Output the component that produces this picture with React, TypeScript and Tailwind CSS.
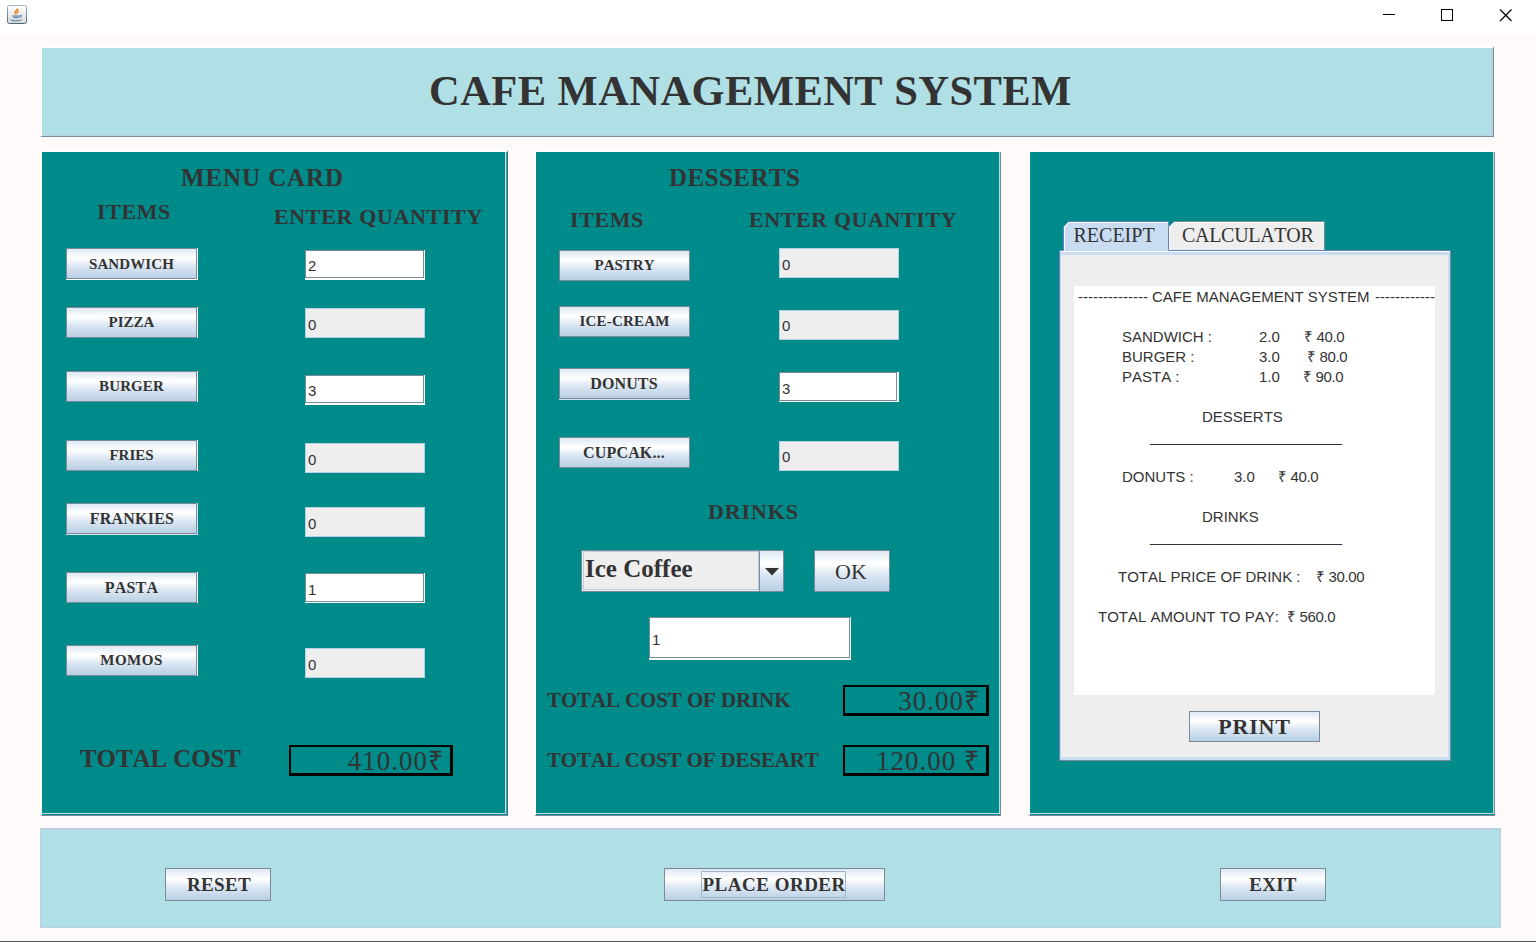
import React from "react";

const metal = "bg-[linear-gradient(180deg,#dde8f3_0%,#ffffff_30%,#ffffff_32%,#dde8f3_58%,#b8cfe5_100%)]";
const serif = "font-['Liberation_Serif','Times_New_Roman',serif]";
const sans = "font-['Liberation_Sans',Arial,sans-serif]";

type ItemButtonProps = { label: string; gap: string; text: string; trim?: string };

function ItemButton({ label, gap, text, trim = "" }: ItemButtonProps) {
  return (
    <div className={`flex shrink-0 ${gap} ${trim}`}>
      <button
        className={`flex h-[31px] w-[131px] items-center justify-center border border-[#7a8a99] ${metal} font-bold leading-[29px] ${text}`}
      >
        {label}
      </button>
    </div>
  );
}

type QtyProps = { value: string; gap: string; edge?: string; pad?: string };

function Quantity({ value, gap, edge, pad = "pt-[3px]" }: QtyProps) {
  if (edge) {
    return (
      <div className={`h-[30px] w-[120px] shrink-0 bg-white ${edge} ${gap} ${sans}`}>
        <div className={`h-full border border-[#7a8a99] pl-[2px] ${pad} text-[15px] leading-[26px]`}>{value}</div>
      </div>
    );
  }
  return (
    <div
      className={`h-[30px] w-[120px] shrink-0 border border-[#b8cfe5] bg-[#eeeeee] pl-[2px] ${pad} text-[15px] leading-[26px] ${gap} ${sans}`}
    >
      {value}
    </div>
  );
}

function Total({ value, width, pad }: { value: string; width: string; pad: string }) {
  return (
    <div
      className={`h-[31px] shrink-0 border-2 border-r-[3px] border-b-[3px] border-black text-right text-[27px] leading-[28px] tracking-[1px] ${width} ${pad}`}
    >
      {value}
    </div>
  );
}

function Panel({ children, wide = false }: { children: React.ReactNode; wide?: boolean }) {
  return (
    <section
      className={`flex h-[666px] shrink-0 border-l-2 border-t-2 border-b border-l-white border-t-white border-b-[#7a8a99] bg-[#008b8b] ${
        wide ? "w-[468px] border-r border-r-[#008b8b]" : "w-[467px]"
      }`}
    >
      <div className="flex min-w-0 flex-1 border-r border-[#7a8a99] pb-px">
        <div className="flex min-w-0 flex-1 flex-col border-b border-r border-[#b8dfe8]">{children}</div>
      </div>
    </section>
  );
}

function JavaIcon() {
  return (
    <svg width="20" height="19" viewBox="0 0 20 19" className="ml-[7px] mt-[5px]">
      <defs>
        <linearGradient id="tile" x1="0" y1="0" x2="0" y2="1">
          <stop offset="0" stopColor="#ffffff" />
          <stop offset="1" stopColor="#d8d8d8" />
        </linearGradient>
        <linearGradient id="rim" x1="0" y1="0" x2="0" y2="1">
          <stop offset="0" stopColor="#9fb4c8" />
          <stop offset="1" stopColor="#4f6677" />
        </linearGradient>
      </defs>
      <rect x="0.5" y="0.5" width="19" height="18" rx="1.8" fill="url(#tile)" stroke="url(#rim)" />
      <path d="M10.6 3.4C11 5.2 7.8 5.8 8 7.6C8.1 8.4 8.8 8.8 9.1 9.2M11.8 6C10.1 6.5 9.8 7.4 10.4 8.6" fill="none" stroke="#ee8a2c" strokeWidth="1.6" />
      <path d="M5.4 10.2H12.6V12.6Q12 13.6 9.2 13.6T5.8 12.6Z" fill="#7f9db8" />
      <path d="M12.8 10.4C15 10 15 12 12.6 12.2M3.6 14.8C5.5 16.2 12.6 16.2 14.6 14.8" fill="none" stroke="#6d8fac" strokeWidth="1.2" />
    </svg>
  );
}

type Cell = { text: string; width: string };

function ReceiptRow({ indent, cells, gap = "" }: { indent: string; cells: Cell[]; gap?: string }) {
  return (
    <div className={`flex h-5 shrink-0 whitespace-pre ${indent} ${gap}`}>
      {cells.map((c) => (
        <span key={c.text} className={`shrink-0 ${c.width} ${c.text.startsWith("₹") ? "tracking-[-0.35px]" : ""}`}>
          {c.text}
        </span>
      ))}
    </div>
  );
}

function TabbedPane() {
  return (
    <div className="ml-[29px] mt-[69px] flex h-[540px] w-[392px] flex-col">
      <div className="flex h-[29px] shrink-0 pl-1">
        <svg width="262" height="30" viewBox="0 0 262 30" className="absolute">
          <path d="M0.5 30V5.5L5.5 0.5H105.5V30Z" fill="#c8ddf2" />
          <path d="M0.5 29V5.5L5.5 0.5H105.5V29" fill="none" stroke="#6382bf" />
          <path d="M1.5 30V6L6 1.5H105" fill="none" stroke="#ffffff" />
          <path d="M106 29V5.5L111 0.5H261.5V29Z" fill="#eeeeee" />
          <path d="M106.5 5.5L111.5 0.5H261.5V29" fill="none" stroke="#7a8a99" />
          <path d="M106.5 29V6L111 1.5H261" fill="none" stroke="#ffffff" />
        </svg>
        <div className="relative w-[106px] pl-[10.5px] text-[20px] leading-[28px]">RECEIPT</div>
        <div className="relative w-[156px] pl-[13px] text-[20px] leading-[28px] tracking-[-0.3px]">CALCULATOR</div>
      </div>
      <div className="flex min-h-0 flex-1 border-b border-l border-r border-t border-b-[#7a8a99] border-l-[#6382bf] border-r-[#7a8a99] border-t-[#6382bf]">
        <div className="flex flex-1 flex-col border-t border-white">
          <div className="flex flex-1 flex-col items-center border-b-[3px] border-l border-r-2 border-t-[3px] border-[#c8ddf2] bg-[#eeeeee]">
            <div className={`mt-[31px] flex h-[409px] w-[361px] shrink-0 flex-col bg-white pt-px text-[15px] leading-5 ${sans}`}>
              <ReceiptRow indent="pl-[4px]" cells={[{ text: "-------------- ", width: "w-[74px]" }, { text: "CAFE MANAGEMENT SYSTEM", width: "w-[223px]" }, { text: "------------", width: "w-[60px]" }]} />
              <ReceiptRow gap="mt-5" indent="pl-[48px]" cells={[{ text: "SANDWICH :", width: "w-[137px]" }, { text: "2.0", width: "w-[45px]" }, { text: "₹ 40.0", width: "w-[50px]" }]} />
              <ReceiptRow indent="pl-[48px]" cells={[{ text: "BURGER :", width: "w-[137px]" }, { text: "3.0", width: "w-[48px]" }, { text: "₹ 80.0", width: "w-[50px]" }]} />
              <ReceiptRow indent="pl-[48px]" cells={[{ text: "PASTA :", width: "w-[137px]" }, { text: "1.0", width: "w-[44px]" }, { text: "₹ 90.0", width: "w-[50px]" }]} />
              <ReceiptRow gap="mt-5" indent="pl-[128px]" cells={[{ text: "DESSERTS", width: "w-[100px]" }]} />
              <ReceiptRow indent="pl-[76px]" cells={[{ text: "_______________________", width: "w-[200px]" }]} />
              <ReceiptRow gap="mt-5" indent="pl-[48px]" cells={[{ text: "DONUTS :", width: "w-[112px]" }, { text: "3.0", width: "w-[44px]" }, { text: "₹ 40.0", width: "w-[50px]" }]} />
              <ReceiptRow gap="mt-5" indent="pl-[128px]" cells={[{ text: "DRINKS", width: "w-[100px]" }]} />
              <ReceiptRow indent="pl-[76px]" cells={[{ text: "_______________________", width: "w-[200px]" }]} />
              <ReceiptRow gap="mt-5" indent="pl-[44px]" cells={[{ text: "TOTAL PRICE OF DRINK :", width: "w-[198px]" }, { text: "₹ 30.00", width: "w-[60px]" }]} />
              <ReceiptRow gap="mt-5" indent="pl-[24px]" cells={[{ text: "TOTAL AMOUNT TO PAY:", width: "w-[189px]" }, { text: "₹ 560.0", width: "w-[60px]" }]} />
            </div>
            <button className={`mt-4 h-[31px] w-[131px] shrink-0 border border-[#7a8a99] ${metal} text-[22px] font-bold leading-[29px] tracking-[0.8px]`}>
              PRINT
            </button>
          </div>
        </div>
      </div>
    </div>
  );
}

export default function App() {
  return (
    <div className={`flex h-[942px] w-[1536px] flex-col overflow-hidden border-b border-[#555555] bg-[#fffafa] text-[#333333] [font-kerning:none] ${serif}`}>
      <header className="flex h-[34px] shrink-0 bg-white">
        <JavaIcon />
        <svg width="130" height="34" viewBox="0 0 130 34" className="ml-auto mr-[23px]" shapeRendering="crispEdges" fill="none" stroke="#000000">
          <path d="M0 14.5H12" />
          <rect x="58.5" y="9.5" width="11" height="11" />
          <path d="M117 9.5L128.5 21M128.5 9.5L117 21" shapeRendering="auto" strokeWidth="1.2" />
        </svg>
      </header>

      <div className="ml-10 mt-3 flex h-[91px] w-[1454px] shrink-0 border-b border-l-2 border-r border-t-2 border-b-[#7a8a99] border-l-white border-r-[#7a8a99] border-t-white">
        <h1 className="flex-1 border-b border-r-2 border-b-[#b8cfe5] border-r-[#b8cfe5] bg-[#b0e0e6] pl-[387px] text-[42.5px] font-bold leading-[86px] tracking-[0.45px]">
          CAFE MANAGEMENT SYSTEM
        </h1>
      </div>

      <main className="ml-10 mt-[13px] flex h-[666px] shrink-0">
        <Panel wide>
          <div className="flex h-[96px] shrink-0">
            <div className="w-0 shrink-0 whitespace-nowrap pl-[55px] pt-[49px] text-[22px] font-bold leading-[22px] tracking-[0.6px]">ITEMS</div>
            <div className="shrink-0 whitespace-nowrap pl-[84px] pt-[12px] font-bold">
              <h2 className="text-[25px] leading-[28px] tracking-[0.9px]">MENU CARD</h2>
              <div className="pl-[93px] pt-[14px] text-[22px] leading-[22px] tracking-[0.65px]">ENTER QUANTITY</div>
            </div>
          </div>
          <div className="flex h-[491px] shrink-0">
            <div className="flex w-[156px] flex-col items-end">
              <ItemButton label="SANDWICH" gap="mt-0" text="pt-px text-[15px] tracking-[0.1px]" trim="border-b border-r border-white" />
              <ItemButton label="PIZZA" gap="mt-[27px]" text="text-[15px]" trim="border-r border-white" />
              <ItemButton label="BURGER" gap="mt-[33px]" text="text-[15px] tracking-[0.1px]" trim="border-r border-white" />
              <ItemButton label="FRIES" gap="mt-[38px]" text="text-[15px]" trim="border-r border-white" />
              <ItemButton label="FRANKIES" gap="mt-[32px]" text="pl-px text-[16px] tracking-[0.2px]" trim="border-b border-r border-[#d5e3f0]" />
              <ItemButton label="PASTA" gap="mt-[37px]" text="text-[16px] tracking-[0.2px]" trim="border-r border-white" />
              <ItemButton label="MOMOS" gap="mt-[42px]" text="text-[15px] tracking-[0.5px]" trim="border-r border-white" />
            </div>
            <div className="ml-[107px] flex flex-col">
              <Quantity value="2" gap="mt-[2px]" edge="pb-[2px] pr-px" pad="pt-[2px]" />
              <Quantity value="0" gap="mt-[28px]" />
              <Quantity value="3" gap="mt-[37px]" edge="pb-[2px] pr-px" pad="pt-[2px]" />
              <Quantity value="0" gap="mt-[38px]" />
              <Quantity value="0" gap="mt-[34px]" />
              <Quantity value="1" gap="mt-[36px]" edge="pb-px pr-px" />
              <Quantity value="0" gap="mt-[45px]" />
            </div>
          </div>
          <div className="mt-[6px] flex">
            <div className="w-[209px] pl-[38px] text-[25px] font-bold leading-[28px] tracking-[-0.1px]">TOTAL COST</div>
            <Total value="410.00₹" width="w-[164px] ml-[38px]" pad="pr-[6px]" />
          </div>
        </Panel>

        <div className="w-[26px] shrink-0" />

        <Panel>
          <h2 className="ml-[133px] mt-[12px] text-[25px] font-bold leading-[28px] tracking-[0.45px]">DESSERTS</h2>
          <div className="mt-[17px] flex h-[22px] shrink-0 text-[22px] font-bold leading-[22px]">
            <div className="w-[179px] pl-[34px] tracking-[0.6px]">ITEMS</div>
            <div className="pl-[34px] tracking-[0.6px]">ENTER QUANTITY</div>
          </div>
          <div className="flex h-[260px] shrink-0 pl-[23px]">
            <div className="flex flex-col">
              <ItemButton label="PASTRY" gap="mt-[19px]" text="text-[15px]" />
              <ItemButton label="ICE-CREAM" gap="mt-[25px]" text="text-[15px] tracking-[0.2px]" />
              <ItemButton label="DONUTS" gap="mt-[31px]" text="pr-px text-[16px] tracking-[0.1px]" trim="border-b border-[#d5e3f0]" />
              <ItemButton label="CUPCAK..." gap="mt-[37px]" text="pr-px pb-px text-[16px] tracking-[0.15px]" />
            </div>
            <div className="ml-[89px] flex flex-col">
              <Quantity value="0" gap="mt-[17px]" />
              <Quantity value="0" gap="mt-[32px]" pad="pt-[2px]" />
              <Quantity value="3" gap="mt-[32px]" edge="pb-px pr-[2px]" />
              <Quantity value="0" gap="mt-[39px]" pad="pt-[2px]" />
            </div>
          </div>
          <h3 className="ml-[172px] mt-[10px] text-[22px] font-bold leading-[22px] tracking-[0.9px]">DRINKS</h3>
          <div className="ml-[45px] mt-[27px] flex h-[42px] shrink-0">
            <div className="flex w-[203px] border border-[#7a8a99]">
              <div className="flex-1 bg-[#eeeeee] pb-px pl-px">
                <div className="h-full border border-[#b8cfe5] pl-px text-[25px] font-bold leading-[34px]">Ice Coffee</div>
              </div>
              <div className={`flex w-[24px] items-center justify-center border-l border-[#7a8a99] pt-[2px] ${metal}`}>
                <svg width="14" height="8" viewBox="0 0 14 8">
                  <path d="M0 0H14L7 7.5Z" fill="#333333" />
                </svg>
              </div>
            </div>
            <button className={`ml-[30px] w-[76px] border border-[#7a8a99] pr-[2px] ${metal} text-[22px] leading-[42px]`}>OK</button>
          </div>
          <div className={`ml-[113px] mt-[25px] h-[43px] w-[202px] shrink-0 bg-white pb-[2px] pr-px ${sans}`}>
            <div className="h-full border border-[#7a8a99] pl-[2px] pt-px text-[15px] leading-[41px]">1</div>
          </div>
          <div className="ml-[11px] mt-[25px] flex shrink-0">
            <div className="w-[296px] whitespace-nowrap text-[21px] font-bold leading-[30px] tracking-[-0.12px]">TOTAL COST OF DRINK</div>
            <Total value="30.00₹" width="w-[146px]" pad="pr-[6px]" />
          </div>
          <div className="ml-[11px] mt-[29px] flex shrink-0">
            <div className="w-[296px] whitespace-nowrap text-[21px] font-bold leading-[30px] tracking-[-0.15px]">TOTAL COST OF DESEART</div>
            <Total value="120.00 ₹" width="w-[146px]" pad="pr-[6px]" />
          </div>
        </Panel>

        <div className="w-[27px] shrink-0" />

        <Panel>
          <TabbedPane />
        </Panel>
      </main>

      <footer className="ml-10 mt-3 flex h-[100px] w-[1461px] shrink-0 border border-t-2 border-[#b8cfe5] bg-[#b0e0e6] pt-[38px]">
        <button className={`ml-[124px] h-[33px] w-[106px] border border-[#7a8a99] pl-[2px] ${metal} text-[19px] font-bold leading-[32px] tracking-[0.3px]`}>RESET</button>
        <button className={`ml-[393px] flex h-[33px] w-[221px] items-center justify-center border border-[#7a8a99] ${metal} text-[19px] font-bold tracking-[0.5px]`}>
          <span className="mr-[3px] h-[27px] w-[145px] whitespace-nowrap border border-[#a3b8cc] pl-px text-left leading-[25px]">PLACE ORDER</span>
        </button>
        <button className={`ml-[335px] h-[33px] w-[106px] border border-[#7a8a99] ${metal} text-[19px] font-bold leading-[32px] tracking-[0.3px]`}>EXIT</button>
      </footer>
    </div>
  );
}
